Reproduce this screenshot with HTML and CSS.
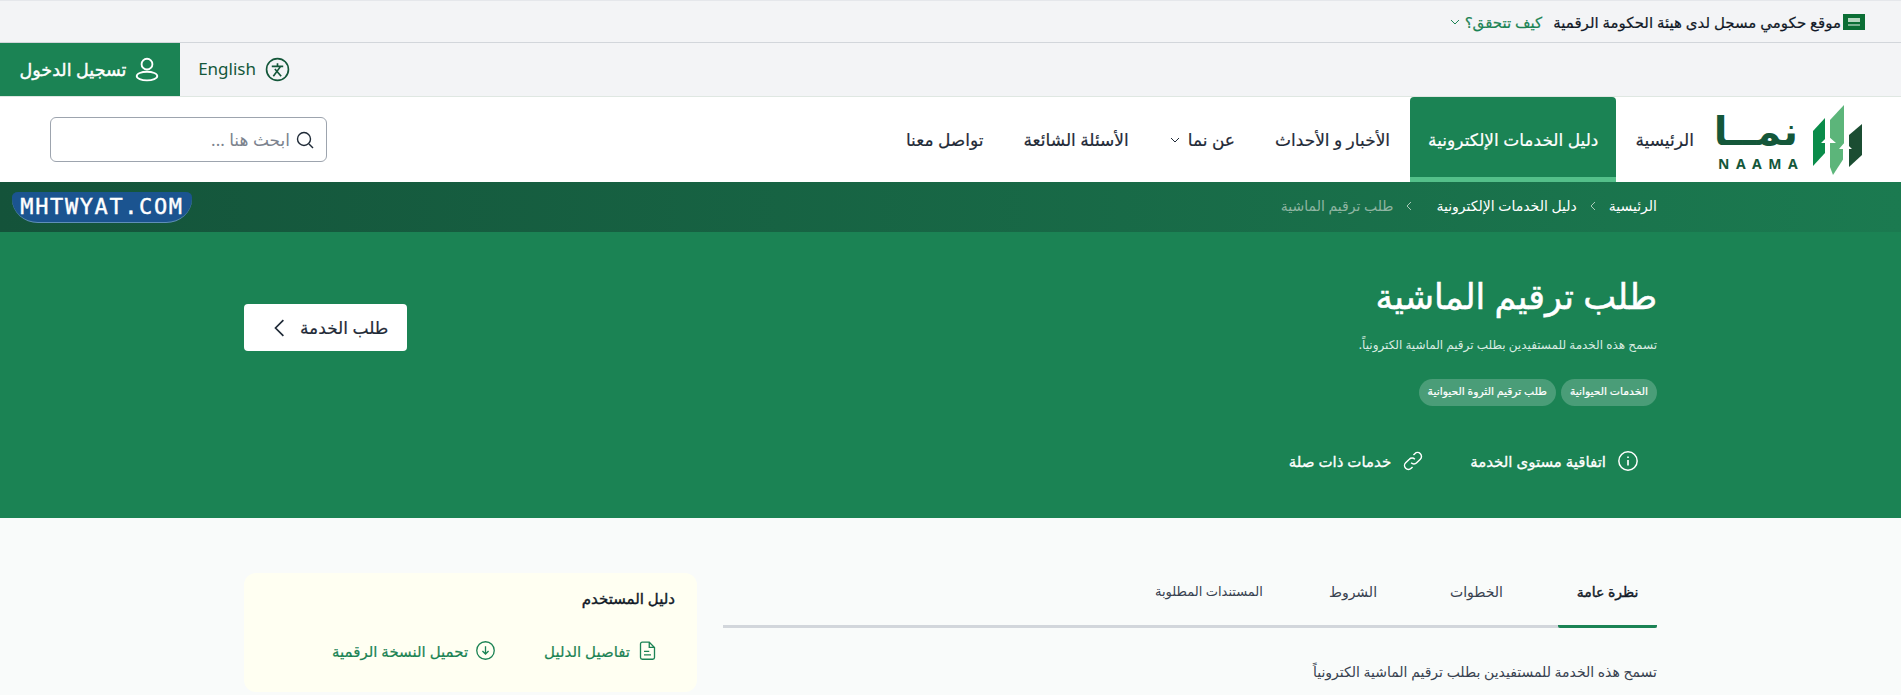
FILE: index.html
```html
<!DOCTYPE html>
<html lang="ar" dir="rtl">

<head>
  <title>طلب ترقيم الماشية</title>
  <meta charset="utf-8">
  <link rel="stylesheet" href="styles.css">
</head>

<body>
  <div class="govbar">
    <svg class="flag" viewBox="0 0 22 16"><rect width="22" height="16" fill="#0b6e35"/><rect x="5" y="4" width="12" height="4" fill="#b5d6bf"/><rect x="5" y="10.500" width="12" height="1" fill="#e8f3eb"/></svg>
    <span class="govtext">موقع حكومي مسجل لدى هيئة الحكومة الرقمية</span>
    <a class="govlink">كيف تتحقق؟</a>
    <svg class="chev" viewBox="0 0 12 12"><path d="M2 4l4 4 4-4" fill="none" stroke="#1b8354" stroke-width="1"/></svg>
  </div>

  <div class="utilbar">
    <a class="lang">
      <svg class="langicon" viewBox="0 0 24 24"><circle cx="12" cy="12" r="10.500" fill="none" stroke="#14573a" stroke-width="1.600"/><path d="M6.500 9h11M12 6v3M8 18.500l7-9.500M9.500 11.500l6 7" fill="none" stroke="#14573a" stroke-width="1.600"/></svg>
      <span class="langtext">English</span>
    </a>
    <a class="login">
      <svg class="usericon" viewBox="0 0 24 24"><circle cx="12" cy="7.500" r="5" fill="none" stroke="#fff" stroke-width="1.700"/><ellipse cx="12" cy="18.500" rx="9.500" ry="4" fill="none" stroke="#fff" stroke-width="1.700"/></svg>
      <span>تسجيل الدخول</span>
    </a>
  </div>

  <header class="mainnav">
    <div class="logo">
      <svg class="logomark" viewBox="0 0 51 70">
        <path d="M50 19v31L37 62V30z" fill="#1b4d32"/>
        <path d="M32 0v53L21 70l-3-8V15z" fill="#5cb57a"/>
        <path d="M13 13v35L1 61V26z" fill="#0a8c4a"/>
        <path d="M16 31l-7 7h5v11h4V38h6zM33 37l-6 7h4v11h4V44h5z" fill="#fff"/>
      </svg>
      <div class="logotext">
        <span class="logoar">نمــا</span>
        <span class="logoen">NAAMA</span>
      </div>
    </div>
    <nav class="navlinks">
      <a class="navitem">الرئيسية</a>
      <a class="navitem active">دليل الخدمات الإلكترونية</a>
      <a class="navitem">الأخبار و الأحداث</a>
      <a class="navitem">عن نما
        <svg class="chev" viewBox="0 0 12 12"><path d="M2 4l4 4 4-4" fill="none" stroke="#1f2a37" stroke-width="1"/></svg>
      </a>
      <a class="navitem">الأسئلة الشائعة</a>
      <a class="navitem">تواصل معنا</a>
    </nav>
    <div class="search">
      <svg class="searchicon" viewBox="0 0 18 18"><circle cx="8" cy="8" r="6.500" fill="none" stroke="#1f2a37" stroke-width="1.400"/><path d="M13 13l4 4" stroke="#1f2a37" stroke-width="1.400"/></svg>
      <span class="placeholder">ابحث هنا ...</span>
    </div>
  </header>

  <div class="crumbs">
    <div class="crumblist">
      <a>الرئيسية</a>
      <svg class="crumbsep" viewBox="0 0 8 12"><path d="M6 2L2 6l4 4" fill="none" stroke="#a9c9b8" stroke-width="1"/></svg>
      <a>دليل الخدمات الإلكترونية</a>
      <svg class="crumbsep last" viewBox="0 0 8 12"><path d="M6 2L2 6l4 4" fill="none" stroke="#a9c9b8" stroke-width="1"/></svg>
      <span class="crumbnow">طلب ترقيم الماشية</span>
    </div>
    <div class="watermark" dir="ltr">MHTWYAT.COM</div>
  </div>

  <section class="hero">
    <div class="herotop">
      <div>
        <h1>طلب ترقيم الماشية</h1>
        <p class="herodesc">تسمح هذه الخدمة للمستفيدين بطلب ترقيم الماشية الكترونياً.</p>
        <div class="tags">
          <span class="tag">الخدمات الحيوانية</span>
          <span class="tag">طلب ترقيم الثروة الحيوانية</span>
        </div>
      </div>
      <a class="requestbtn">
        <span>طلب الخدمة</span>
        <svg class="btnchev" viewBox="0 0 12 16"><path d="M9 1L2 8l7 7" fill="none" stroke="#1f2a37" stroke-width="1.500"/></svg>
      </a>
    </div>
    <div class="herolinks">
      <a class="herolink">
        <svg class="linkicon" viewBox="0 0 24 24"><circle cx="12" cy="12" r="10" fill="none" stroke="#fff" stroke-width="1.600"/><path d="M12 11v6M12 7v1.600" stroke="#fff" stroke-width="1.800"/></svg>
        <span>اتفاقية مستوى الخدمة</span>
      </a>
      <a class="herolink">
        <svg class="linkicon" viewBox="0 0 24 24"><path d="M10 14a4 4 0 006 0l4-4a4 4 0 00-6-6l-1.500 1.500M14 10a4 4 0 00-6 0l-4 4a4 4 0 006 6l1.500-1.500" fill="none" stroke="#fff" stroke-width="1.600"/></svg>
        <span>خدمات ذات صلة</span>
      </a>
    </div>
  </section>

  <main class="content">
    <div class="overview">
      <div class="tabs">
        <a class="tab active">نظرة عامة</a>
        <a class="tab">الخطوات</a>
        <a class="tab">الشروط</a>
        <a class="tab">المستندات المطلوبة</a>
      </div>
      <p class="overviewtext">تسمح هذه الخدمة للمستفيدين بطلب ترقيم الماشية الكترونياً</p>
    </div>
    <aside class="guide">
      <h3>دليل المستخدم</h3>
      <div class="guidelinks">
        <a class="guidelink">
          <svg class="guideicon" viewBox="0 0 24 24"><path d="M6 2.500h8l6 6V20a2 2 0 01-2 2H6a2 2 0 01-2-2V4.500a2 2 0 012-2zM14 3v5.500h6M8 13h6M8 17h8" fill="none" stroke="#1b8354" stroke-width="1.500"/></svg>
          <span>تفاصيل الدليل</span>
        </a>
        <a class="guidelink">
          <svg class="guideicon" viewBox="0 0 24 24"><circle cx="12" cy="12" r="10" fill="none" stroke="#1b8354" stroke-width="1.500"/><path d="M12 7v9M8.500 12.500L12 16l3.500-3.500" fill="none" stroke="#1b8354" stroke-width="1.500"/></svg>
          <span>تحميل النسخة الرقمية</span>
        </a>
      </div>
    </aside>
  </main>
</body>

</html>
```

FILE: styles.css
```css
* {
  box-sizing: border-box;
}

html,
body {
  height: 695px;
  overflow: hidden;
}

body {
  margin: 0;
  background: #f9fbfa;
  color: #1f2a37;
  font-family: "Noto Sans", "DejaVu Sans", sans-serif;
}

a {
  color: inherit;
  text-decoration: none;
}

.govbar {
  display: flex;
  align-items: center;
  height: 43px;
  padding-right: 36px;
  background: #f3f4f6;
  border-top: 1px solid #e5e7eb;
  border-bottom: 1px solid #d2d6db;
  font-size: 15px;
  color: #111927;
  -webkit-text-stroke: 0.2px;
}

.flag {
  width: 22px;
  height: 16px;
  margin-left: 2px;
}

.govlink {
  margin-right: 11px;
  color: #1b8354;
}

.chev {
  width: 12px;
  height: 12px;
  margin-right: 4px;
}

.utilbar {
  display: flex;
  justify-content: flex-end;
  height: 54px;
  background: #f3f4f6;
  border-bottom: 1px solid #dfe7e2;
}

.lang {
  display: flex;
  align-items: center;
  gap: 9px;
  width: 110px;
  font-size: 17px;
  color: #14573a;
}

.langtext {
  padding-bottom: 2px;
}

.langicon {
  width: 25px;
  height: 25px;
}

.login {
  display: flex;
  align-items: center;
  justify-content: center;
  gap: 8px;
  width: 180px;
  padding-bottom: 1px;
  background: #1b8354;
  color: #fff;
  font-size: 17.500px;
  -webkit-text-stroke: 0.4px;
}

.usericon {
  width: 26px;
  height: 26px;
}

.mainnav {
  display: flex;
  align-items: center;
  height: 85px;
  padding: 0 38px 0 50px;
  background: #fff;
}

.logo {
  display: flex;
  flex: none;
  align-items: center;
  gap: 14px;
  width: 145px;
}

.logomark {
  flex: none;
  width: 51px;
  height: 70px;
}

.logotext {
  display: flex;
  flex: none;
  flex-direction: column;
  width: 80px;
  line-height: 1;
  white-space: nowrap;
}

.logoar {
  font-size: 40px;
  font-weight: 700;
  color: #14573a;
  line-height: 44px;
}

.logoen {
  direction: ltr;
  margin-top: 5px;
  font-size: 14px;
  font-weight: 700;
  letter-spacing: 6.500px;
  color: #14573a;
}

.navlinks {
  display: flex;
  flex: 1;
  align-self: stretch;
  margin-right: 5px;
  font-size: 17px;
  -webkit-text-stroke: 0.2px;
}

.navitem {
  display: flex;
  align-items: center;
  padding: 0 20px;
}

.navitem .chev {
  margin-right: 7px;
}

.navitem:first-child {
  padding: 0 19px;
}

.navitem.active {
  padding: 0 18px;
  background: #1b8354;
  color: #fff;
  border-radius: 4px 4px 0 0;
  box-shadow: inset 0 -5px 0 #54c08a;
}

.search {
  display: flex;
  align-items: center;
  gap: 6px;
  flex: none;
  width: 277px;
  height: 45px;
  padding: 0 12px;
  background: #fff;
  border: 1px solid #9da4ae;
  border-radius: 6px;
}

.searchicon {
  width: 18px;
  height: 18px;
}

.placeholder {
  font-size: 17px;
  color: #7c838e;
}

.crumbs {
  display: flex;
  align-items: center;
  justify-content: space-between;
  height: 50px;
  padding: 0 244px 0 12px;
  background: linear-gradient(to left, #1b7a50, #14533a);
  color: #fff;
  font-size: 14px;
}

.crumblist {
  display: flex;
  align-items: center;
  gap: 12px;
  padding-bottom: 3px;
}

.crumbsep {
  width: 8px;
  height: 12px;
}

.crumbsep.last {
  margin-right: 11px;
}

.crumbnow {
  color: #8fb5a2;
}

.watermark {
  width: 180px;
  height: 31px;
  background: #1b5490;
  border-bottom: 1px solid #5f8fb8;
  border-radius: 6px 6px 26px 26px / 5px 5px 24px 24px;
  color: #fff;
  font-family: "DejaVu Sans Mono", monospace;
  font-size: 22px;
  letter-spacing: 1.600px;
  line-height: 30px;
  text-align: center;
  -webkit-text-stroke: 0.4px;
}

.hero {
  height: 286px;
  padding: 38px 244px 0;
  background: #1b8354;
  color: #fff;
}

.herotop {
  display: flex;
  justify-content: space-between;
  align-items: flex-start;
}

h1 {
  margin: 0;
  font-size: 35px;
  font-weight: 500;
  line-height: 52px;
  -webkit-text-stroke: 0.5px;
}

.herodesc {
  margin: 14px 0 0;
  font-size: 12px;
  color: #d9ece2;
}

.tags {
  display: flex;
  gap: 5px;
  margin-top: 26px;
}

.tag {
  height: 27px;
  padding: 0 9px;
  border-radius: 14px;
  background: #4a9d78;
  font-size: 10.800px;
  line-height: 24px;
  -webkit-text-stroke: 0.2px;
}

.requestbtn {
  display: flex;
  align-items: center;
  gap: 13px;
  height: 47px;
  margin-top: 34px;
  padding: 0 19px 0 29px;
  background: #fff;
  border-radius: 4px;
  color: #1f2a37;
  font-size: 17px;
  -webkit-text-stroke: 0.2px;
}

.btnchev {
  width: 14px;
  height: 18px;
}

.herolinks {
  display: flex;
  gap: 46px;
  margin-top: 44px;
  padding-right: 18px;
}

.herolink {
  display: flex;
  align-items: center;
  gap: 11px;
  font-size: 15px;
  -webkit-text-stroke: 0.3px;
}

.linkicon {
  width: 22px;
  height: 22px;
}

.content {
  display: flex;
  justify-content: space-between;
  padding: 55px 244px 0;
}

.overview {
  width: 934px;
}

.tabs {
  display: flex;
  gap: 37px;
  height: 55px;
  border-bottom: 3px solid #d2d6db;
  font-size: 14px;
  color: #384250;
}

.tab {
  padding: 9px 18px 0;
  text-align: center;
}

.tab:last-child {
  padding-right: 11px;
  font-size: 13px;
}

.tab.active {
  width: 99px;
  margin-bottom: -3px;
  padding: 9px 0 0;
  border-bottom: 3px solid #1b8354;
  border-radius: 2px;
  color: #111927;
  -webkit-text-stroke: 0.4px;
}

.overviewtext {
  margin: 34px 0 0;
  font-size: 14px;
  color: #384250;
}

.guide {
  width: 453px;
  height: 119px;
  padding: 15px 22px;
  background: #fffff2;
  border-radius: 12px;
}

h3 {
  margin: 0;
  font-size: 15px;
  font-weight: 400;
  color: #111927;
  -webkit-text-stroke: 0.4px;
}

.guidelinks {
  display: flex;
  gap: 48px;
  margin-top: 32px;
  padding-right: 17px;
}

.guidelink {
  display: flex;
  align-items: center;
  gap: 7px;
  font-size: 15px;
  color: #1b8354;
  -webkit-text-stroke: 0.2px;
}

.guideicon {
  width: 21px;
  height: 21px;
}
```
